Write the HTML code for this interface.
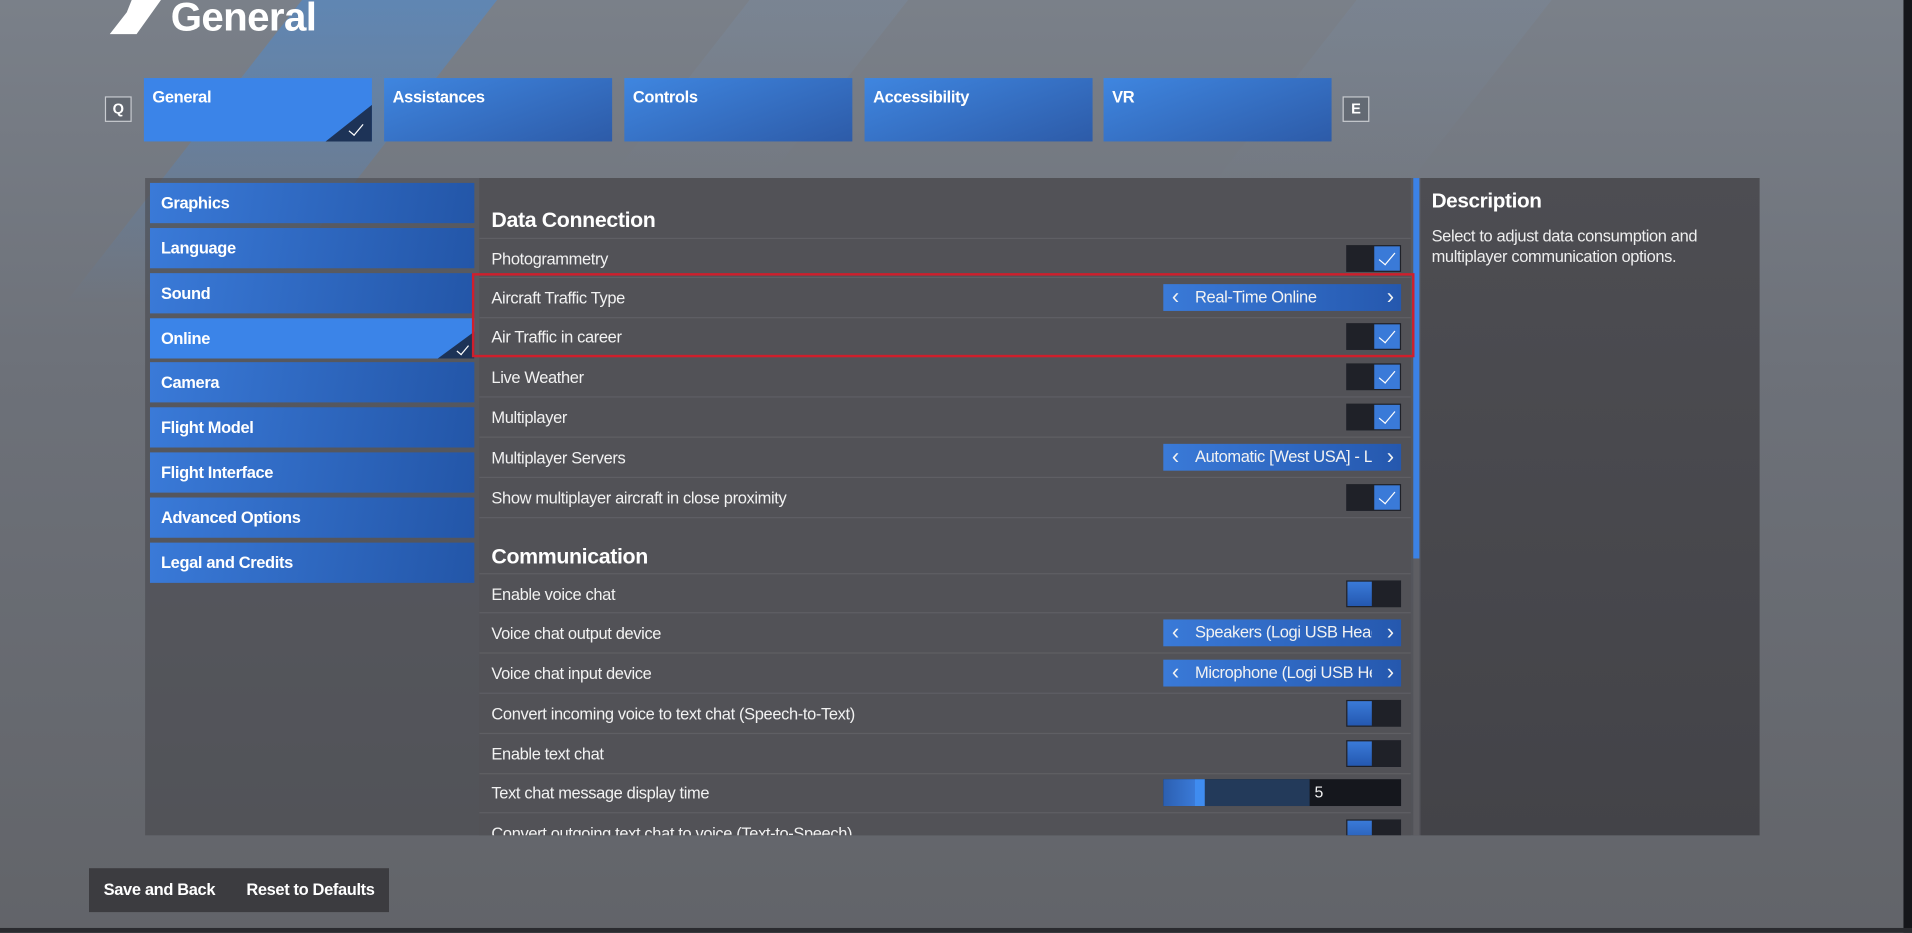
<!DOCTYPE html>
<html><head><meta charset="utf-8"><style>
*{margin:0;padding:0;box-sizing:border-box}
body{width:1912px;height:933px;overflow:hidden;background:#6b7078;font-family:"Liberation Sans",sans-serif;color:#fff}
#s{position:absolute;left:0;top:0;width:1568px;height:765px;transform:scale(1.21939);transform-origin:0 0;overflow:hidden;
background:linear-gradient(180deg,#7a8089 0%,#6d7179 40%,#626469 100%)}
.a{position:absolute}
.streak{position:absolute;transform:skewX(-38deg)}
.tab{position:absolute;top:64px;width:187px;height:52px;background:linear-gradient(160deg,#3f86e0,#2d5ba8);font-size:13.5px;font-weight:bold;padding:8px 7px;letter-spacing:-.3px}
.key{position:absolute;top:79px;width:22px;height:21px;border:1px solid #c8cbd0;font-size:12px;font-weight:bold;text-align:center;line-height:19px;background:rgba(80,85,95,.5)}
.nav{position:absolute;left:123px;width:266px;height:33px;background:linear-gradient(100deg,#3a7ad8,#2356a8);font-size:13.5px;font-weight:bold;padding:9px 9px;letter-spacing:-.3px}
.row{position:absolute;left:393px;width:764px;height:33px;border-bottom:1px solid #5f5f64;font-size:13.5px;padding:0 10px;line-height:33px;color:#f2f2f2;letter-spacing:-.3px}
.hd{position:absolute;left:403px;font-size:17.5px;font-weight:bold;letter-spacing:-.3px}
.tg{position:absolute;right:8px;top:5px;width:45px;height:22px;background:#1f2128}
.tg.on i{position:absolute;right:1px;top:1px;width:21px;height:20px;background:#3a7ad8}
.tg.off i{position:absolute;left:1px;top:1px;width:20px;height:20px;background:linear-gradient(#3a7ad8,#2458b0)}
.tg.on i:after{content:"";position:absolute;left:7px;top:2px;width:6px;height:12px;border-right:1.5px solid #fff;border-bottom:1.5px solid #fff;transform:rotate(40deg)}
.sel{position:absolute;right:8px;top:5px;width:195px;height:22px;background:linear-gradient(90deg,#3a7ad8,#2558ae);font-size:13.5px;line-height:22px;overflow:hidden;white-space:nowrap}
.sel .t{position:absolute;left:26px;width:145px;overflow:hidden}
.sel .l,.sel .r{position:absolute;top:0;font-size:18px;line-height:20px}
.sel .l{left:7px}.sel .r{right:6px}
.btn{font-size:13.5px;font-weight:bold;letter-spacing:-.3px}
</style></head><body><div id="s">
<div class="streak" style="left:150px;top:0;width:160px;height:250px;background:linear-gradient(180deg,rgba(70,140,220,.5),rgba(90,130,180,0))"></div>
<div class="streak" style="left:560px;top:0;width:130px;height:140px;background:linear-gradient(180deg,rgba(120,150,185,.2),rgba(120,150,185,0))"></div>
<div class="streak" style="left:1050px;top:0;width:160px;height:160px;background:linear-gradient(180deg,rgba(120,150,185,.15),rgba(120,150,185,0))"></div>
<svg class="a" style="left:90px;top:0" width="45" height="30"><polygon points="18,0 42,0 22,28 0,28 14,10" fill="#fff"/></svg>
<div class="a" style="left:140px;top:-5px;font-size:33px;font-weight:bold;letter-spacing:-.5px">General</div>
<div class="key" style="left:86px">Q</div>
<div class="tab" style="left:118px;background:#3b84e8">General
<div class="a" style="right:0;bottom:0;width:0;height:0;border-left:38px solid transparent;border-bottom:30px solid #1d3357"></div>
<div class="a" style="right:10px;bottom:5px;width:6px;height:12px;border-right:1.5px solid #fff;border-bottom:1.5px solid #fff;transform:rotate(40deg)"></div></div>
<div class="tab" style="left:315px">Assistances</div>
<div class="tab" style="left:512px">Controls</div>
<div class="tab" style="left:709px">Accessibility</div>
<div class="tab" style="left:905px">VR</div>
<div class="key" style="left:1101px">E</div>
<div class="a" style="left:119px;top:146px;width:1324px;height:539px;background:rgba(68,68,73,.55)"></div>
<div class="a" style="left:393px;top:146px;width:764px;height:539px;background:#525257"></div>
<div class="a" style="left:1165px;top:146px;width:278px;height:539px;background:linear-gradient(180deg,#4d4d52,#434348)"></div>
<div class="a" style="left:1159px;top:146px;width:5px;height:539px;background:#5e5e63"></div>
<div class="a" style="left:1159px;top:146px;width:5px;height:312px;background:#3b82e6"></div>
<div class="nav" style="top:150px">Graphics</div>
<div class="nav" style="top:187px">Language</div>
<div class="nav" style="top:224px">Sound</div>
<div class="nav" style="top:261px;background:#3b84e8">Online
<div class="a" style="right:0;bottom:0;border-left:30px solid transparent;border-bottom:22px solid #1d3357"></div>
<div class="a" style="right:7px;bottom:3px;width:5px;height:10px;border-right:1.5px solid #fff;border-bottom:1.5px solid #fff;transform:rotate(40deg)"></div></div>
<div class="nav" style="top:297px">Camera</div>
<div class="nav" style="top:334px">Flight Model</div>
<div class="nav" style="top:371px">Flight Interface</div>
<div class="nav" style="top:408px">Advanced Options</div>
<div class="nav" style="top:445px">Legal and Credits</div>
<div class="a" style="left:393px;top:146px;width:764px;height:539px;overflow:hidden">
<div style="position:absolute;left:-393px;top:-146px;width:1568px;height:685px">
<div class="hd" style="top:170px">Data Connection</div>
<div class="row" style="top:195px;border-top:1px solid #5f5f64">Photogrammetry<div class="tg on"><i></i></div></div>
<div class="row" style="top:228px">Aircraft Traffic Type<div class="sel"><span class="l">&lsaquo;</span><span class="t">Real-Time Online</span><span class="r">&rsaquo;</span></div></div>
<div class="row" style="top:260px">Air Traffic in career<div class="tg on"><i></i></div></div>
<div class="row" style="top:293px">Live Weather<div class="tg on"><i></i></div></div>
<div class="row" style="top:326px">Multiplayer<div class="tg on"><i></i></div></div>
<div class="row" style="top:359px">Multiplayer Servers<div class="sel"><span class="l">&lsaquo;</span><span class="t">Automatic [West USA] - Low latency</span><span class="r">&rsaquo;</span></div></div>
<div class="row" style="top:392px">Show multiplayer aircraft in close proximity<div class="tg on"><i></i></div></div>
<div class="hd" style="top:446px">Communication</div>
<div class="row" style="top:470px;border-top:1px solid #5f5f64">Enable voice chat<div class="tg off"><i></i></div></div>
<div class="row" style="top:503px">Voice chat output device<div class="sel"><span class="l">&lsaquo;</span><span class="t">Speakers (Logi USB Headset)</span><span class="r">&rsaquo;</span></div></div>
<div class="row" style="top:536px">Voice chat input device<div class="sel"><span class="l">&lsaquo;</span><span class="t">Microphone (Logi USB Headset)</span><span class="r">&rsaquo;</span></div></div>
<div class="row" style="top:569px">Convert incoming voice to text chat (Speech-to-Text)<div class="tg off"><i></i></div></div>
<div class="row" style="top:602px">Enable text chat<div class="tg off"><i></i></div></div>
<div class="row" style="top:634px">Text chat message display time
<div class="a" style="right:8px;top:5px;width:195px;height:22px;background:#15171d">
<div class="a" style="left:0;top:0;width:120px;height:22px;background:#233a5a"></div>
<div class="a" style="left:0;top:0;width:26px;height:22px;background:linear-gradient(90deg,#2c5fb0,#3a7ad8)"></div>
<div class="a" style="left:26px;top:0;width:8px;height:22px;background:#3f8cf0"></div>
<div class="a" style="left:124px;top:0;line-height:22px;font-size:13px">5</div></div></div>
<div class="row" style="top:667px;border-bottom:0">Convert outgoing text chat to voice (Text-to-Speech)<div class="tg off"><i></i></div></div>
</div></div>
<div class="a" style="left:387px;top:224px;width:773px;height:69px;border:2px solid #cf1f2c"></div>
<div class="a" style="left:1174px;top:155px;font-size:17px;font-weight:bold;letter-spacing:-.3px">Description</div>
<div class="a" style="left:1174px;top:185px;font-size:13.5px;line-height:17px;color:#eee;letter-spacing:-.3px">Select to adjust data consumption and<br>multiplayer communication options.</div>
<div class="a" style="left:73px;top:712px;width:246px;height:36px;background:#3c3c40"></div>
<div class="a btn" style="left:85px;top:722px">Save and Back</div>
<div class="a btn" style="left:202px;top:722px">Reset to Defaults</div>
<div class="a" style="left:1561px;top:0;width:7px;height:765px;background:#15161a"></div>
<div class="a" style="left:0;top:761px;width:1568px;height:4px;background:#2a2b2f"></div>
</div></body></html>
